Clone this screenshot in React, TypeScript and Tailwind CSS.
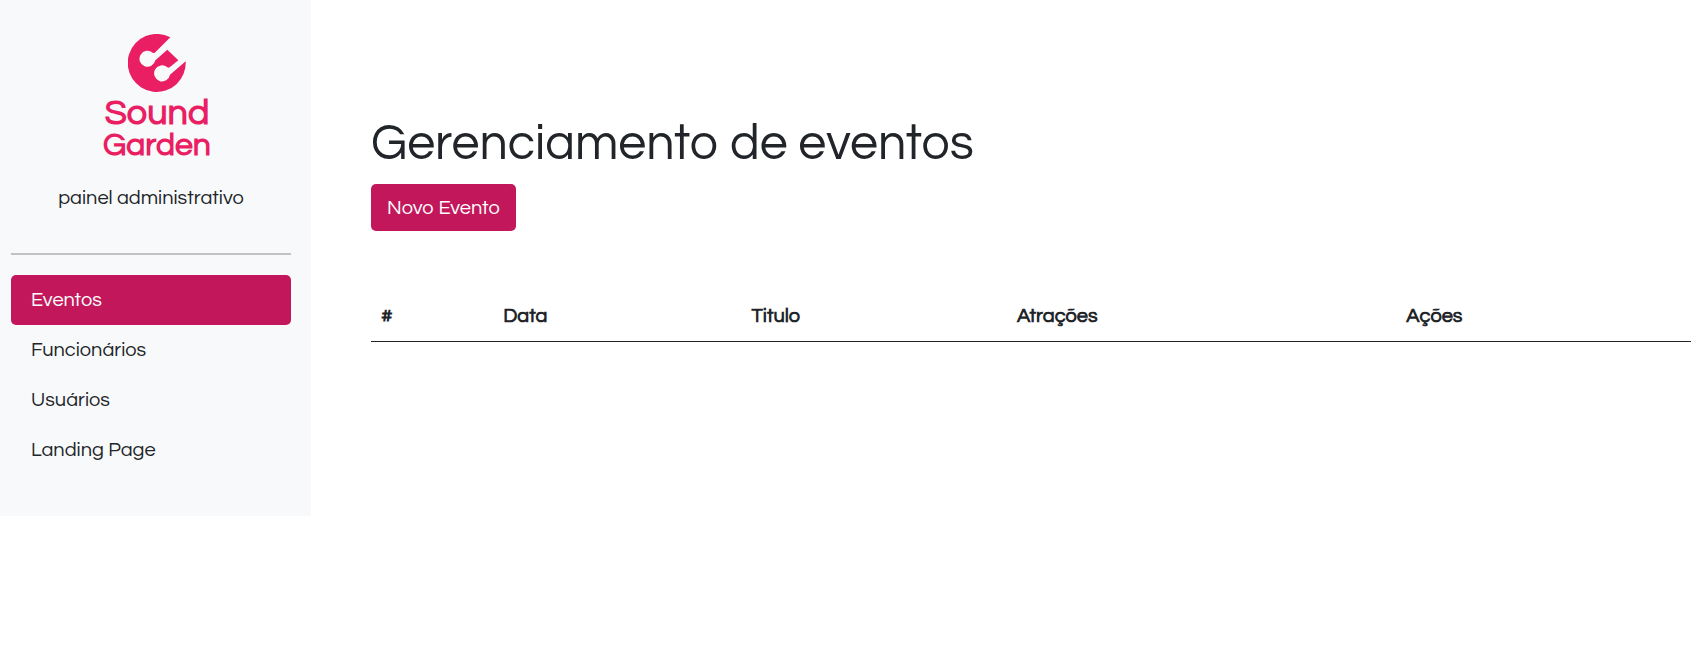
const navItems = [
  { label: "Eventos", active: true },
  { label: "Funcionários", active: false },
  { label: "Usuários", active: false },
  { label: "Landing Page", active: false },
];

const columns = ["#", "Data", "Titulo", "Atrações", "Ações"];

function Logo() {
  return (
    <a href="#" className="flex flex-col items-center font-bold text-[#e91e63]">
      <svg viewBox="0 0 174 174" className="size-[58px]" aria-hidden="true">
        <path
          fill="currentColor"
          d="M127 10A87 87 0 1 0 173 82L126 122A24 24 0 1 1 118 100Q122 103 126 99L151 79L118 47L82 79A24 24 0 1 1 74 56Q78 59 82 55Z"
        />
      </svg>
      <span className="mt-[3px] text-[36px] leading-9">Sound</span>
      <span className="text-[32px] leading-[30px]">Garden</span>
    </a>
  );
}

function Sidebar() {
  return (
    <aside className="w-[311px] shrink-0 bg-[#f8f9fa] pt-[34px] pr-5 pb-[41px] pl-[11px]">
      <div className="flex flex-col items-center">
        <div className="pl-3">
          <Logo />
        </div>
        <p className="mt-[22px]">painel administrativo</p>
      </div>
      <hr className="mt-10 mb-5 border-t-2 border-[#c1c2c4]" />
      <nav>
        <ul>
          {navItems.map((item) => (
            <li key={item.label}>
              <a
                href="#"
                aria-current={item.active ? "page" : undefined}
                className={
                  item.active
                    ? "block rounded-[5px] bg-[#c2185b] px-5 py-2.5 text-white"
                    : "block rounded-[5px] px-5 py-2.5"
                }
              >
                {item.label}
              </a>
            </li>
          ))}
        </ul>
      </nav>
    </aside>
  );
}

export default function App() {
  return (
    <div className="flex items-start bg-white font-['Questrial','Inter',sans-serif] text-[20px] leading-[30px] text-[#212529]">
      <Sidebar />
      <main className="min-w-0 flex-1 pt-[114px] pr-3.5 pl-[60px]">
        <h1 className="text-[50px] leading-[60px]">Gerenciamento de eventos</h1>
        <button type="button" className="mt-2.5 h-[47px] rounded-[5px] bg-[#c2185b] px-4 text-white">
          Novo Evento
        </button>
        <table className="mt-[60px] w-full">
          <thead>
            <tr className="border-b border-[#212529]">
              {columns.map((column) => (
                <th key={column} scope="col" className="p-2.5 text-left font-bold">
                  {column}
                </th>
              ))}
            </tr>
          </thead>
          <tbody />
        </table>
      </main>
    </div>
  );
}
